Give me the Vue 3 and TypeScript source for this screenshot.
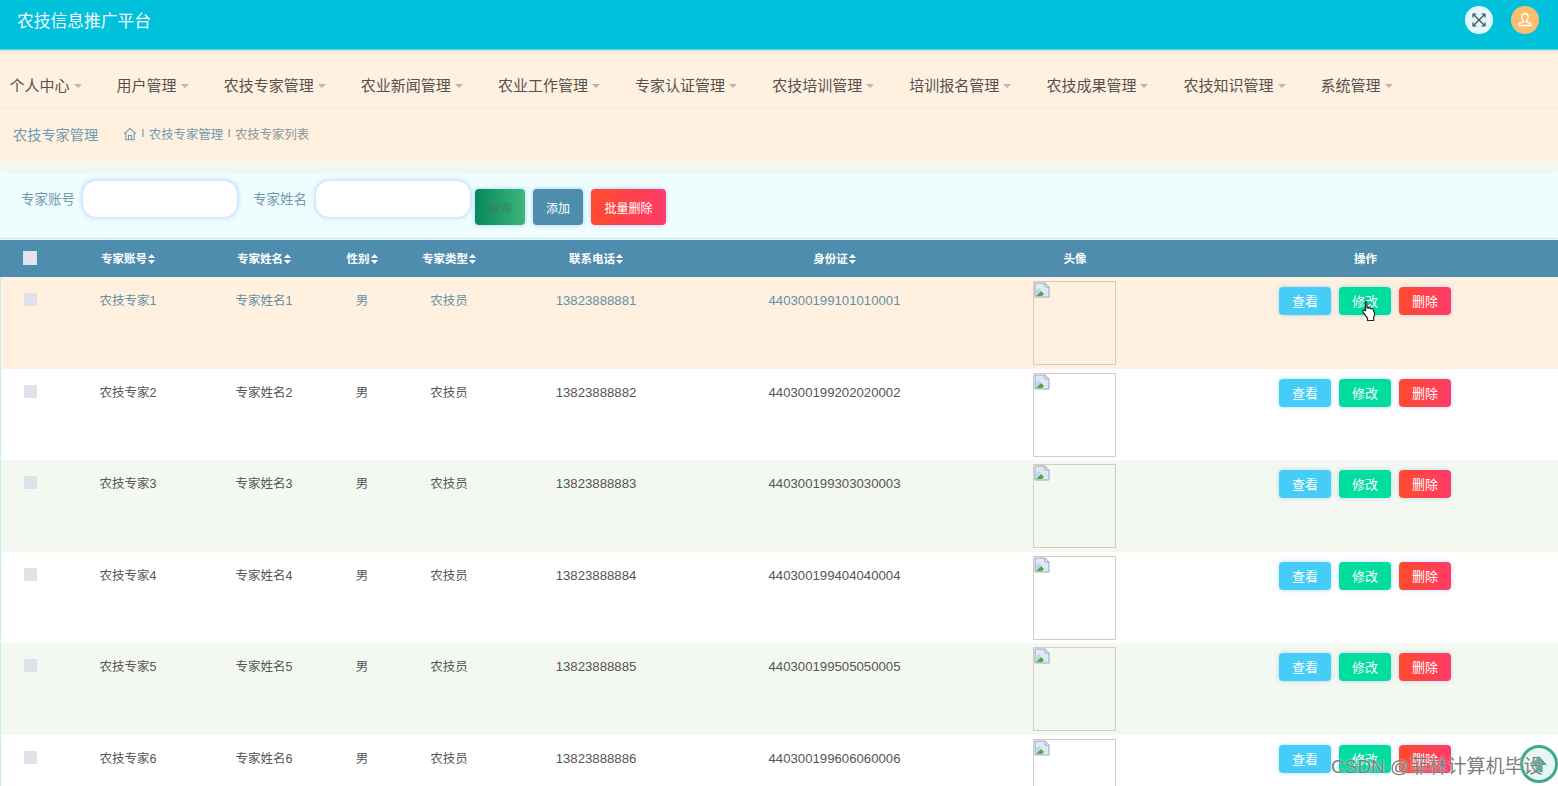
<script setup lang="ts">
interface Row { id: number; account: string; name: string; phone: string; idCard: string }

const menus: string[] = ['个人中心', '用户管理', '农技专家管理', '农业新闻管理', '农业工作管理', '专家认证管理', '农技培训管理', '培训报名管理', '农技成果管理', '农技知识管理', '系统管理']

const columns = [
  { label: '专家账号', sort: true },
  { label: '专家姓名', sort: true },
  { label: '性别', sort: true },
  { label: '专家类型', sort: true },
  { label: '联系电话', sort: true },
  { label: '身份证', sort: true },
  { label: '头像', sort: false },
  { label: '操作', sort: false }
]

const rows: Row[] = [1, 2, 3, 4, 5, 6].map((n) => ({
  id: n,
  account: `农技专家${n}`,
  name: `专家姓名${n}`,
  phone: `1382388888${n}`,
  idCard: `440300199${n}0${n}0${n}000${n}`
}))
</script>

<template>
  <div class="page">
    <header class="topbar">
      <div class="brand">农技信息推广平台</div>
      <div class="top-actions">
        <button class="round expand" aria-label="全屏">
          <svg width="18" height="18" viewBox="0 0 18 18" fill="none" stroke="#3d4b55" stroke-width="1.2">
            <path d="M3.500 3.500l11 11M14.500 3.500l-11 11" />
            <path d="M3 6.500V3h3.500M11.500 3H15v3.500M3 11.500V15h3.500M15 11.500V15h-3.500" />
          </svg>
        </button>
        <button class="round user" aria-label="用户">
          <svg width="18" height="18" viewBox="0 0 18 18" fill="none" stroke="#fff" stroke-width="1.300">
            <path d="M9 2.500c2 0 3.200 1.500 3.200 3.400 0 1.500-.7 2.900-1.700 3.600v1.200l3.700 1.500c.6.300.8.800.8 1.500v.8H3v-.8c0-.7.200-1.200.8-1.500l3.700-1.500V9.500C6.500 8.800 5.800 7.400 5.800 5.900 5.800 4 7 2.500 9 2.500z" />
          </svg>
        </button>
      </div>
    </header>

    <nav class="menu">
      <div v-for="m in menus" :key="m" class="menu-item">
        <span>{{ m }}</span><i class="caret"></i>
      </div>
    </nav>

    <div class="crumbs">
      <span class="crumb-title">农技专家管理</span>
      <div class="crumb-path">
        <svg width="14" height="14" viewBox="0 0 14 14" fill="none" stroke="#6f9bb0" stroke-width="1.100">
          <path d="M1 6.800L7 1.500l6 5.300M2.800 5.800v7h8.400v-7M5.500 12.800V8.500h3v4.300" />
        </svg>
        <span class="sep">I</span>
        <span class="c1">农技专家管理</span>
        <span class="sep">I</span>
        <span class="c2">农技专家列表</span>
      </div>
    </div>
    <div class="strip"></div>

    <section class="search">
      <label class="lbl first">专家账号</label>
      <input class="field" type="text" />
      <label class="lbl second">专家姓名</label>
      <input class="field" type="text" />
      <div class="search-btns">
        <button class="btn query">查询</button>
        <button class="btn add">添加</button>
        <button class="btn batch">批量删除</button>
      </div>
    </section>

    <table class="grid">
      <colgroup>
        <col style="width:60px" />
        <col style="width:136px" />
        <col style="width:136px" />
        <col style="width:60px" />
        <col style="width:114px" />
        <col style="width:180px" />
        <col style="width:297px" />
        <col style="width:184px" />
        <col style="width:391px" />
      </colgroup>
      <thead>
        <tr>
          <th><span class="chk head"></span></th>
          <th v-for="c in columns" :key="c.label" :class="{ op: c.label === '操作' }">
            {{ c.label }}<svg v-if="c.sort" class="sort" width="7" height="10" viewBox="0 0 7 10" fill="#fff"><path d="M3.500 0L7 4H0zM3.500 10L0 6h7z" /></svg>
          </th>
        </tr>
      </thead>
      <tbody>
        <tr v-for="r in rows" :key="r.id" :class="{ hover: r.id === 1, tint: r.id !== 1 && r.id % 2 === 1 }">
          <td><span class="chk"></span></td>
          <td>{{ r.account }}</td>
          <td>{{ r.name }}</td>
          <td>男</td>
          <td>农技员</td>
          <td class="num">{{ r.phone }}</td>
          <td class="num">{{ r.idCard }}</td>
          <td class="pic">
            <div class="avatar">
              <svg width="16" height="16" viewBox="0 0 16 16">
                <path d="M1 1h10l4 4v10H1z" fill="#dfe8f6" stroke="#9aa7b8" stroke-width="1" />
                <path d="M11 1v4h4z" fill="#fff" stroke="#9aa7b8" stroke-width="1" />
                <path d="M2 14l5-5 3 3 -2 2z" fill="#5aa63c" />
                <path d="M2 9l3-3 2 2-5 5z" fill="#b9d4f2" />
              </svg>
            </div>
          </td>
          <td class="op">
            <div class="ops">
              <button class="mini view">查看</button>
              <button class="mini edit">修改</button>
              <button class="mini del">删除</button>
            </div>
          </td>
        </tr>
      </tbody>
    </table>

    <svg class="cursor" width="16" height="22" viewBox="0 0 16 22">
      <path d="M4.500 1.500c.9 0 1.500.6 1.500 1.500v5c.8-.4 1.600-.3 2 .3.800-.4 1.700-.2 2 .5.900-.4 2-.1 2.300.8l1.200 3.400c.4 1.500 0 3-.8 4.200v3.300H6.500v-2.300L2.200 12.300c-.6-.8-.4-1.700.2-2.100.6-.4 1.300-.2 1.800.3l.3.300V3c0-.9 0-1.500 0-1.500z" fill="#fff" stroke="#222" stroke-width="1.200" stroke-linejoin="round" />
    </svg>

    <div class="to-top">
      <svg width="22" height="22" viewBox="0 0 22 22"><path d="M11 3l8 9h-4.500v7h-7v-7H3z" fill="#3fa98e" /></svg>
    </div>
    <div class="watermark">CSDN @菲林计算机毕设</div>
  </div>
</template>

<style>
html, body { margin: 0; overflow: hidden; background: #fff; }
</style>

<style scoped>
.page {
  position: relative;
  width: 1558px;
  height: 786px;
  overflow: hidden;
  background: #fff;
  font-family: "Liberation Sans", "Noto Sans CJK SC", sans-serif;
}
.topbar {
  height: 49px;
  background: #00c1dc;
  border-bottom: 1px solid #5fd3ea;
  display: flex;
  align-items: flex-start;
  justify-content: space-between;
  box-shadow: 0 1px 2px rgba(120, 170, 200, .35);
  position: relative;
}
.brand {
  color: #f2fbfd;
  font-size: 16.750px;
  line-height: 20px;
  margin: 12px 0 0 17px;
}
.top-actions { display: flex; gap: 18px; margin: 6px 19px 0 0; }
.round {
  width: 28px;
  height: 28px;
  border: 0;
  padding: 0;
  border-radius: 50%;
  display: flex;
  align-items: center;
  justify-content: center;
}
.expand { background: #e2f8fd; }
.user { background: #fdbd6f; }
.menu {
  height: 44px;
  background: #fff0e0;
  border-bottom: 1px solid #f3ebe0;
  display: flex;
  align-items: center;
  padding: 14px 0 0 9.500px;
}
.menu-item {
  display: flex;
  align-items: center;
  font-size: 15px;
  line-height: 20px;
  color: #55524d;
  margin-right: 35.100px;
  white-space: nowrap;
}
.caret {
  width: 0;
  height: 0;
  margin-left: 4px;
  border-left: 4px solid transparent;
  border-right: 4px solid transparent;
  border-top: 4px solid #b9b6b0;
}
.crumbs {
  height: 49px;
  padding-bottom: 3px;
  background: #fff0e0;
  display: flex;
  align-items: center;
  padding-left: 13px;
}
.crumb-title { font-size: 14.200px; color: #6f9bb0; width: 110px; }
.crumb-path { display: flex; align-items: center; gap: 4.500px; font-size: 12.400px; color: #6f9bb0; }
.sep { font-size: 10px; color: #6f8a98; }
.c2 { color: #8c959a; }
.strip { height: 12px; background: #f3f8f0; }
.search {
  height: 65px;
  background: #effdff;
  display: flex;
  align-items: flex-start;
  box-shadow: 0 1px 2px rgba(70, 190, 180, .45);
  position: relative;
}
.lbl {
  font-size: 13.500px;
  line-height: 20px;
  color: #6f9bb0;
  margin-top: 17px;
  white-space: nowrap;
}
.first { margin-left: 21px; margin-right: 7px; }
.second { margin-left: 15px; margin-right: 8px; }
.field {
  width: 156px;
  height: 38px;
  margin-top: 7px;
  box-sizing: border-box;
  border: 1px solid #cfe5fb;
  border-radius: 14px;
  background: #fff;
  box-shadow: 0 0 4px rgba(130, 190, 250, .55);
  outline: none;
}
.search-btns { display: flex; gap: 8px; margin: 16px 0 0 4px; }
.btn {
  height: 36px;
  border: 0;
  padding: 0;
  border-radius: 4px;
  color: #fff;
  font: inherit;
  font-size: 12px;
  box-shadow: 0 0 4px rgba(130, 190, 250, .7);
}
.query { width: 50px; background: linear-gradient(90deg, #07875f, #3eb878); color: #3c7f66; }
.add { width: 50px; background: #4f8daf; }
.batch { width: 75px; background: linear-gradient(90deg, #ff4a2e, #ff3b68); }
.grid {
  margin-top: 2px;
  width: 1558px;
  border-collapse: collapse;
  table-layout: fixed;
  font-size: 12.500px;
  color: #555;
}
thead tr { background: #4f8daf; height: 37px; }
th {
  padding: 0 0 2px;
  box-sizing: border-box;
  text-align: center;
  font-size: 11.500px;
  font-weight: 700;
  color: #fff;
  white-space: nowrap;
}
.sort { margin-left: 1px; vertical-align: -1px; }
tbody tr { height: 91.600px; background: #fff; }
tbody tr.tint { background: #f3f8f0; }
tbody tr.hover { background: #fff0e0; color: #6590a6; }
td {
  padding: 16px 0 0;
  height: 91.600px;
  box-sizing: border-box;
  vertical-align: top;
  text-align: center;
  line-height: 16px;
  overflow: hidden;
}
td:first-child { box-shadow: inset 1px 0 0 #c9eff3; }
td.num { font-size: 13.200px; }
th.op { padding-left: 6px; }
.chk {
  display: block;
  width: 13px;
  height: 13px;
  margin-left: 24px;
  background: #dfe2e8;
}
.chk.head { width: 14px; height: 14px; margin-left: 23px; background: #e2e6ec; }
td.pic { padding-top: 4px; }
.avatar {
  width: 83px;
  height: 84px;
  box-sizing: border-box;
  margin-left: 50px;
  border: 1px solid #d3cdc6;
  display: flex;
  align-items: flex-start;
}
td.op { padding: 10px 0 0 5px; }
.ops { display: flex; justify-content: center; gap: 8px; }
.mini {
  width: 52px;
  height: 28px;
  border: 0;
  padding: 2px 0 0;
  border-radius: 4px;
  color: #fff;
  font: inherit;
  font-size: 13px;
  box-shadow: 0 0 4px rgba(130, 190, 250, .6);
}
.view { background: #45cdf8; }
.edit { background: #00dd9f; }
.del { background: linear-gradient(90deg, #ff4a2e, #ff3b68); }
.cursor { position: absolute; left: 1361px; top: 300px; }
.to-top {
  position: absolute;
  left: 1520px;
  top: 745px;
  width: 38px;
  height: 38px;
  box-sizing: border-box;
  border: 3px solid #3fa98e;
  border-radius: 50%;
  background: #e9f6f4;
  display: flex;
  align-items: center;
  justify-content: center;
}
.watermark {
  position: absolute;
  left: 1331px;
  top: 755px;
  font-size: 19px;
  line-height: 24px;
  color: #7d7d7d;
  white-space: nowrap;
  text-shadow: 0 0 2px rgba(255, 255, 255, .9);
}
</style>
